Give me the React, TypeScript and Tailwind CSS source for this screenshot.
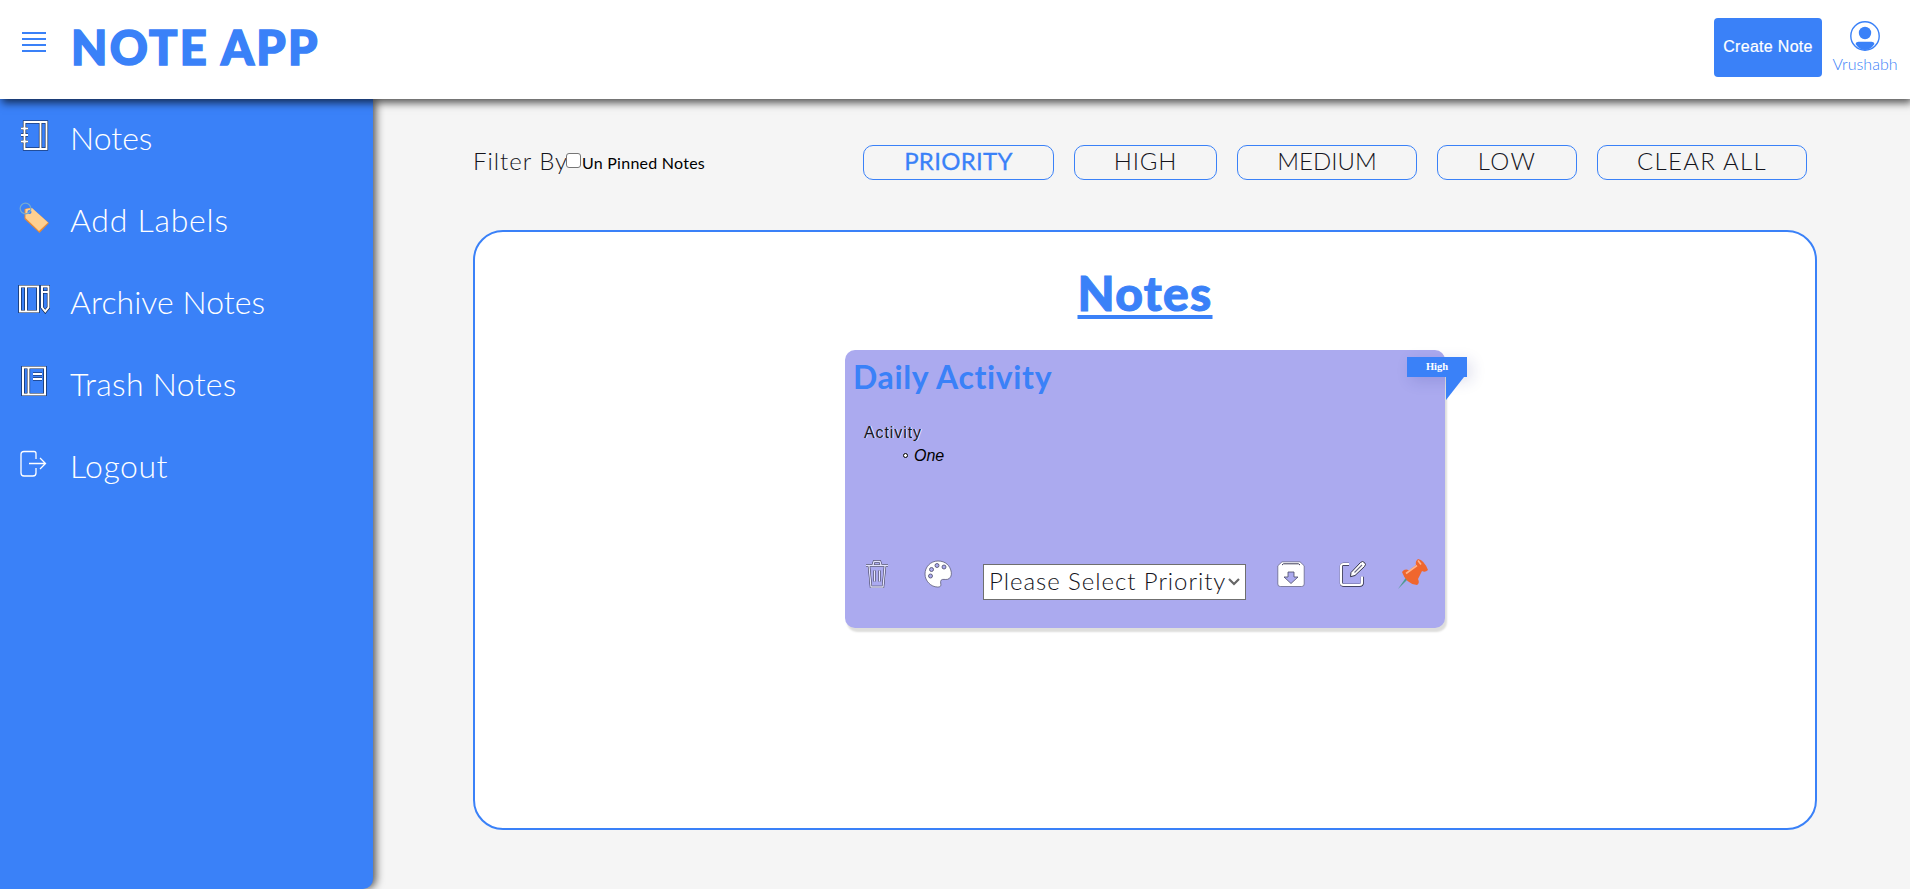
import type { ReactNode } from "react";

const thin = "font-light text-[#14141c]";

function Svg({ children, className = "" }: { children: ReactNode; className?: string }) {
  return (
    <svg viewBox="0 0 32 32" fill="none" className={`size-8 shrink-0 ${className}`}>
      {children}
    </svg>
  );
}

function NotebookIcon() {
  const shape = (
    <>
      <path d="M6.500 3h22v27h-22zM22.500 3v27" />
      <path d="M3 9.500h7M3 16h7M3 22.500h7" />
    </>
  );
  return (
    <Svg>
      <g stroke="#0b1b3a" strokeWidth="3.200">{shape}</g>
      <g stroke="#fff" strokeWidth="2">{shape}</g>
    </Svg>
  );
}

function ArchiveBookIcon() {
  const shape = <path d="M2 3.500h18v25H2zM8 3.500v25M24 3.500h6.500v21l-3.250 4-3.250-4zM24 9h6" />;
  return (
    <Svg>
      <g stroke="#0b1b3a" strokeWidth="3.200">{shape}</g>
      <g stroke="#fff" strokeWidth="2">{shape}</g>
    </Svg>
  );
}

function TrashBookIcon() {
  const shape = <path d="M5 2.500h22v27H5zM10.500 2.500v27M15 9h9M15 14h9" />;
  return (
    <Svg>
      <g stroke="#0b1b3a" strokeWidth="3.200">{shape}</g>
      <g stroke="#fff" strokeWidth="2">{shape}</g>
    </Svg>
  );
}

function TagIcon() {
  return (
    <Svg>
      <path d="M6.500 8 13 6.500 31 22 21.500 32 6.500 18z" fill="#e88a35" />
      <path d="M7.500 8 14 7 30 21.500 21 30 7.500 17z" fill="#ffd090" />
      <circle cx="11.500" cy="11" r="2" fill="#3a81f8" />
      <circle cx="7.500" cy="7.500" r="5.300" stroke="#77a9cf" strokeWidth="1.300" />
    </Svg>
  );
}

function LogoutIcon() {
  return (
    <Svg>
      <path
        d="M18 12V6.500Q18 4.500 16 4.500H6Q3 4.500 3 7.500V26Q3 29 6 29h9q3 0 3-3v-5M11 16.500h16M22 11l5.500 5.500L22 22"
        stroke="#fff"
        strokeWidth="1.300"
      />
    </Svg>
  );
}

const menu = [
  { label: "Notes", icon: <NotebookIcon />, track: "tracking-[0px]" },
  { label: "Add Labels", icon: <TagIcon />, track: "tracking-[0.75px]" },
  { label: "Archive Notes", icon: <ArchiveBookIcon />, track: "tracking-[0.05px]" },
  { label: "Trash Notes", icon: <TrashBookIcon />, track: "tracking-[0.3px]" },
  { label: "Logout", icon: <LogoutIcon />, track: "tracking-[0.5px]" },
];

function Header() {
  return (
    <header className="relative z-10 flex h-[99px] shrink-0 items-start bg-white shadow-[2px_4px_8px_rgba(0,0,0,0.65)]">
      <svg viewBox="0 0 24 20" className="mt-8 ml-[22px] h-5 w-6">
        <path d="M0 1h24M0 7h24M0 13h24M0 19h24" stroke="#3a81f8" strokeWidth="2" />
      </svg>
      <h1 className="mt-[18px] ml-[25px] text-[47px] leading-[58px] font-black tracking-[2.3px] whitespace-nowrap text-[#3a81f8] [-webkit-text-stroke:1.6px_#3a81f8] [stroke-linejoin:round]">
        NOTE APP
      </h1>
      <button className="mt-[18px] ml-auto h-[59px] w-[108px] rounded bg-[#3a81f8] pb-0.5 font-['Liberation_Sans',sans-serif] text-base tracking-[0.3px] whitespace-nowrap text-white [-webkit-text-stroke:0.2px_#fff]">
        Create Note
      </button>
      <div className="mt-[21px] mr-3 ml-[10px] flex w-[66px] flex-col items-center">
        <svg viewBox="0 0 30 30" className="h-[30px] w-[30px]" fill="#3a81f8">
          <circle cx="15" cy="15" r="14.200" fill="none" stroke="#3a81f8" strokeWidth="1.400" />
          <circle cx="15" cy="12" r="6.200" />
          <path d="M5.500 23q.5-2.300 3-2.300h13q2.500 0 3 2.300Q20.500 29 15 29t-9.500-6z" />
        </svg>
        <span className="mt-[3px] text-base leading-5 font-light text-[#3a81f8]">Vrushabh</span>
      </div>
    </header>
  );
}

const filters = [
  { label: "HIGH", box: "w-[143px]", track: "tracking-[0.9px]" },
  { label: "MEDIUM", box: "w-[180px]", track: "tracking-[0px]" },
  { label: "LOW", box: "w-[140px]", track: "tracking-[1.4px]" },
  { label: "CLEAR ALL", box: "w-[210px]", track: "tracking-[1.3px]" },
];

const pill = "flex h-[35px] items-center justify-center rounded-[10px] border border-[#3a81f8] pb-[3px] text-2xl whitespace-nowrap";

function Filters() {
  return (
    <div className="flex h-[35px] items-center">
      <span className={`w-[92px] pb-[3px] text-2xl leading-[32px] tracking-[1px] whitespace-nowrap ${thin}`}>Filter By</span>
      <span className="mb-1 ml-px size-[15px] rounded-[3px] border border-[#767676] bg-white" />
      <span className="mt-px ml-px text-base tracking-[0.25px] whitespace-nowrap text-black">Un Pinned Notes</span>
      <div className="mr-[10px] ml-auto flex gap-5">
        <button className={`${pill} w-[191px] tracking-[0.3px] text-[#3a81f8] [-webkit-text-stroke:0.3px_#3a81f8]`}>PRIORITY</button>
        {filters.map((f) => (
          <button key={f.label} className={`${pill} ${f.box}`}>
            <span className={`${thin} ${f.track}`}>{f.label}</span>
          </button>
        ))}
      </div>
    </div>
  );
}

function NoteCard() {
  return (
    <article className="relative flex h-[278px] w-[600px] flex-col rounded-[10px] bg-[#abaaef] shadow-[2px_4px_2px_#dededc]">
      <h3 className="mt-[7px] ml-2 text-[32px] leading-[40px] font-bold tracking-[0.65px] whitespace-nowrap text-[#3a81f8]">
        Daily Activity
      </h3>
      <div className="mt-6 ml-[19px] font-['Liberation_Sans',sans-serif] text-base leading-[23px]">
        <p className="tracking-[0.9px] text-[#16161f] [text-shadow:1px_0_0_#ececff]">Activity</p>
        <p className="flex items-center pl-[39px] text-black italic">
          <span className="mr-[6px] size-[5px] rounded-full border border-black bg-white" />
          One
        </p>
      </div>
      <div className="absolute top-[7px] right-[-22px] flex h-5 w-[60px] items-center justify-center bg-[#3a81f8] font-['Liberation_Serif',serif] text-[10.5px] font-bold text-white shadow-[4px_4px_15px_rgba(26,35,126,0.15)]">
        High
      </div>
      <svg viewBox="0 0 18 23" className="absolute top-[27px] right-[-19px] h-[23px] w-[18px]">
        <path d="M0 0h18L0 23z" fill="#3a81f8" />
      </svg>
      <div className="mt-auto mb-[26px] flex h-[42px] items-start">
        <svg viewBox="0 0 24 28" className="ml-5 h-7 w-6" fill="none">
          <g stroke="#34344a" strokeWidth="2.300">
            <path d="M1 5.500h22M8 5l1-3.500h6L16 5M4 6l2 21h12l2-21M9.500 10.500v11M14.500 10.500v11" />
          </g>
          <g stroke="#e4e4ff" strokeWidth="1.300">
            <path d="M1 5.500h22M8 5l1-3.500h6L16 5M4 6l2 21h12l2-21M9.500 10.500v11M14.500 10.500v11" />
          </g>
        </svg>
        <svg viewBox="0 0 28 28" className="ml-[35px] size-7">
          <path
            d="M14 1C6.500 1 1 7 1 14s6 13 12.500 13c2 0 2.800-.4 3.200-1.200.6-1.600-.8-4 .4-5.600 1.500-1.600 4.100-.3 6.600-.9 2.500-.8 4.100-3.400 3.600-7C26.200 5.500 21.500 1 14 1z"
            fill="#fff"
            stroke="#5c5c78"
            strokeWidth=".8"
          />
          <g fill="#abaaef" stroke="#4a4a66" strokeWidth=".8">
            <circle cx="6.500" cy="16" r="2" />
            <circle cx="7.500" cy="9.500" r="2" />
            <circle cx="13" cy="5.500" r="2" />
            <circle cx="20" cy="7" r="2" />
          </g>
        </svg>
        <div className="mt-1 ml-[31px] flex h-9 w-[263px] items-center justify-between border border-[#6f6f6f] bg-white pr-[5px] pl-[5px]">
          <span className={`pb-0.5 text-2xl tracking-[0.95px] whitespace-nowrap ${thin}`}>Please Select Priority</span>
          <svg viewBox="0 0 12 8" className="h-2 w-3" fill="none">
            <path d="M1 1l5 5 5-5" stroke="#666" strokeWidth="2.200" />
          </svg>
        </div>
        <svg viewBox="0 0 28 26" className="mt-px ml-[31px] h-[26px] w-7">
          <path d="M5 .8h18l4.200 4V23q0 2.500-2.500 2.500H3.300Q.8 25.500.8 23V4.800z" fill="#fff" stroke="#66668a" strokeWidth=".8" />
          <path d="M5 4l1.500-1.200h15L23 4" fill="none" stroke="#3c3c58" strokeWidth="1" />
          <path d="M11 11h6v5h4l-7 6.500L7 16h4z" fill="#abaaef" stroke="#4a4a66" strokeWidth=".8" />
        </svg>
        <svg viewBox="0 0 28 28" className="ml-[34px] size-7" fill="none">
          <path d="M10 4.300H4.500Q2.300 4.300 2.300 6.500V23q0 2.300 2.500 2.300h16q2.500 0 2.500-2.500v-6" stroke="#24243a" strokeWidth="3" />
          <path d="M10 4H4.500Q2 4 2 6.500V22.500Q2 25 4.500 25h16q2.500 0 2.500-2.500v-6" stroke="#fff" strokeWidth="2.200" />
          <path d="M12 12.500 21.500 2.500q2-2 4 0t0 4L16 15.500l-4.500 1.200z" fill="#fff" stroke="#34344a" strokeWidth="1" />
          <path d="M15.500 12.500 23 5" stroke="#6a6a86" strokeWidth="1.100" />
        </svg>
        <svg viewBox="0 0 32 32" className="mt-[-2px] ml-[30px] size-8">
          <path d="M12 20 1 31l9-13z" fill="#4f9a93" />
          <path d="M5 14q3-4 7-1.500L19 7q-1-4 2-6 6 1 10 11-3 3-6 1l-4 8q2 4-1 6Q9 26 5 14z" fill="#f0662e" />
          <path d="M9 15.500 20 7.500M21 2.500l3 4" stroke="#ffb58c" strokeWidth="1.600" />
        </svg>
      </div>
    </article>
  );
}

export default function App() {
  return (
    <div className="flex h-[889px] w-full flex-col overflow-hidden bg-[#f5f5f5] font-['Lato','Open_Sans',sans-serif]">
      <Header />
      <div className="flex flex-1">
        <nav className="flex w-[373px] shrink-0 flex-col rounded-br-[10px] bg-[#3a81f8] shadow-[3px_0_8px_rgba(0,0,0,0.65)]">
          {menu.map((m) => (
            <a key={m.label} className="flex h-[82px] items-start pt-[20px] pl-[18px] text-white">
              {m.icon}
              <span className={`ml-5 text-[32px] leading-[38px] font-light whitespace-nowrap ${m.track}`}>{m.label}</span>
            </a>
          ))}
        </nav>
        <main className="ml-[100px] flex w-[1344px] flex-col pt-[46px]">
          <Filters />
          <section className="mt-[50px] flex h-[600px] flex-col items-center rounded-[30px] border-2 border-[#3a81f8] bg-white">
            <h2 className="mt-[32px] mb-[28px] text-[48px] leading-[58px] font-black tracking-[1.3px] text-[#3a81f8] underline decoration-[4px] underline-offset-[4px] [-webkit-text-stroke:1px_#3a81f8] [text-decoration-skip-ink:none]">
              Notes
            </h2>
            <NoteCard />
          </section>
        </main>
      </div>
    </div>
  );
}
